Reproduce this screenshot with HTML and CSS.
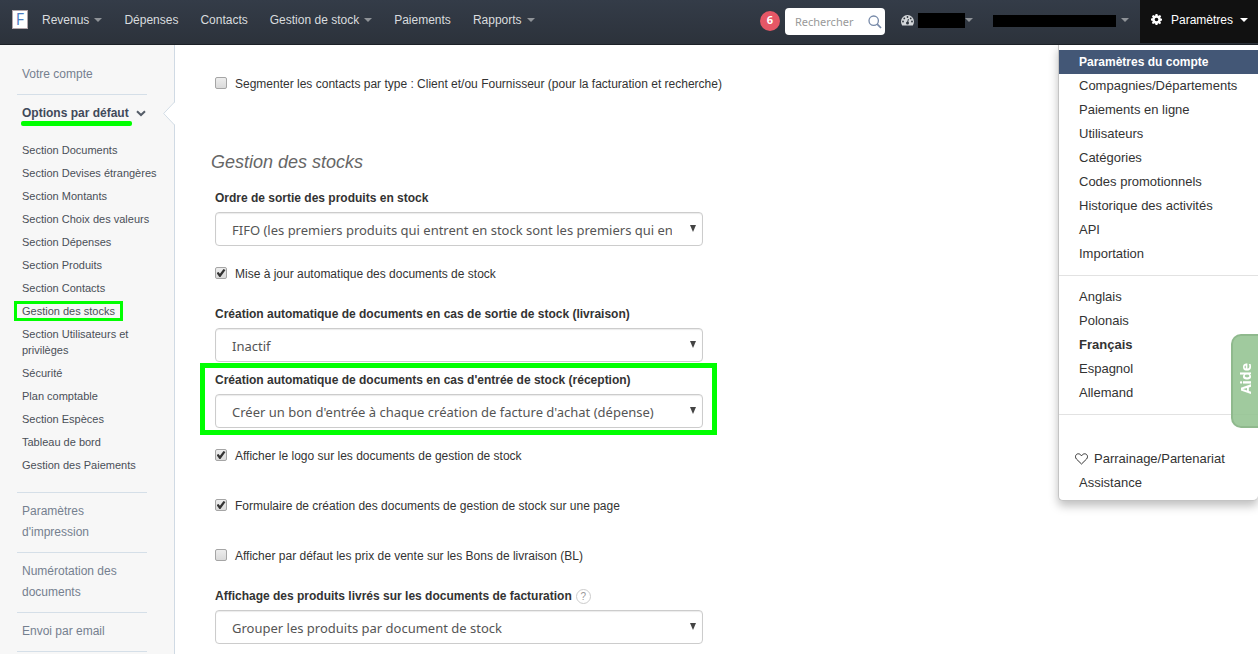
FILE: index.html
```html
<!DOCTYPE html>
<html lang="fr">
<head>
<meta charset="utf-8">
<title>Options par défaut</title>
<link rel="stylesheet" href="styles.css">
</head>
<body>
<header class="topbar">
  <a class="logo" href="#" aria-label="Accueil"><span>F</span></a>
  <nav class="nav">
    <a href="#">Revenus<i class="caret"></i></a>
    <a href="#">Dépenses</a>
    <a href="#">Contacts</a>
    <a href="#">Gestion de stock<i class="caret"></i></a>
    <a href="#">Paiements</a>
    <a href="#">Rapports<i class="caret"></i></a>
  </nav>
  <div class="tools">
    <span class="badge">6</span>
    <form class="search">
      <input type="text" placeholder="Rechercher" aria-label="Rechercher">
      <button type="button" aria-label="Lancer la recherche"><svg width="14" height="14" viewBox="0 0 14 14"><circle cx="5.7" cy="5.7" r="4.7" fill="none" stroke="#7689a8" stroke-width="1.3"/><path d="M9.2 9.2 13 13" stroke="#7689a8" stroke-width="1.7"/></svg></button>
    </form>
    <button type="button" class="account" aria-label="Tableau de bord">
      <svg width="13" height="11" viewBox="0 0 13 11"><path d="M6.5 0A6.5 6.5 0 0 0 0 6.5c0 1.5.4 2.8 1.2 4h10.6c.8-1.200 1.200-2.500 1.200-4A6.500 6.500 0 0 0 6.500 0z" fill="#d5d8db"/><g fill="#2f363f"><circle cx="2" cy="6.500" r=".9"/><circle cx="3.300" cy="3.400" r=".9"/><circle cx="6.500" cy="2" r=".9"/><circle cx="9.700" cy="3.400" r=".9"/><circle cx="11" cy="6.500" r=".9"/><circle cx="6.500" cy="8" r="1.500"/></g><path d="M6.500 8 7.400 4" stroke="#2f363f"/></svg>
      <span class="mask mask-short"></span><i class="caret"></i>
    </button>
    <button type="button" class="company" aria-label="Compagnie"><span class="mask mask-long"></span><i class="caret"></i></button>
    <button type="button" class="settings">
      <svg width="11" height="11" viewBox="0 0 12 12"><path fill="#fff" fill-rule="evenodd" d="M5 0h2l.4 1.600.9.400L9.800 1.100l1.300 1.400-.9 1.400.3.900 1.500.3v2l-1.600.4-.3.800.9 1.500-1.400 1.300-1.400-.9-.9.400L7 12H5l-.4-1.500-.9-.4-1.400.9L.9 9.700l.9-1.400-.3-.9L0 7V5l1.600-.3.300-.9L1 2.400 2.400 1l1.400.9.8-.4zM6 4a2 2 0 1 0 0 4 2 2 0 0 0 0-4z"/></svg>
      <span>Paramètres</span><i class="caret"></i>
    </button>
    <ul class="menu">
      <li class="current"><a href="#">Paramètres du compte</a></li>
      <li><a href="#">Compagnies/Départements</a></li>
      <li><a href="#">Paiements en ligne</a></li>
      <li><a href="#">Utilisateurs</a></li>
      <li><a href="#">Catégories</a></li>
      <li><a href="#">Codes promotionnels</a></li>
      <li><a href="#">Historique des activités</a></li>
      <li><a href="#">API</a></li>
      <li><a href="#">Importation</a></li>
      <li class="divider"></li>
      <li><a href="#">Anglais</a></li>
      <li><a href="#">Polonais</a></li>
      <li><a href="#"><b>Français</b></a></li>
      <li><a href="#">Espagnol</a></li>
      <li><a href="#">Allemand</a></li>
      <li class="divider divider-wide"></li>
      <li><a href="#" class="with-icon"><svg width="13" height="12" viewBox="0 0 13 12"><path d="M6.500 11 1.400 6C-.6 3.500 1 .8 3.300.8 5 .8 6 2 6.500 3 7 2 8 .8 9.700.8 12 .8 13.600 3.500 11.600 6z" fill="none" stroke="#333"/></svg>Parrainage/Partenariat</a></li>
      <li><a href="#">Assistance</a></li>
    </ul>
  </div>
</header>
<div class="layout">
  <aside class="sidebar">
    <ul class="sections">
      <li><a href="#">Votre compte</a></li>
      <li class="active">
        <a href="#"><span class="marked">Options par défaut</span><svg width="10" height="7" viewBox="0 0 10 7"><path d="M1 1.200 5 5l4-3.800" fill="none" stroke="#555d68" stroke-width="2"/></svg></a>
        <svg class="notch" width="12" height="24" viewBox="0 0 12 24"><path d="M12 0 1 11.500 12 23z" fill="#fff"/><path d="M11.500 0 .7 11.500 11.500 23" fill="none" stroke="#d3dde6"/></svg>
        <ul class="subsections">
          <li><a href="#">Section Documents</a></li>
          <li><a href="#">Section Devises étrangères</a></li>
          <li><a href="#">Section Montants</a></li>
          <li><a href="#">Section Choix des valeurs</a></li>
          <li><a href="#">Section Dépenses</a></li>
          <li><a href="#">Section Produits</a></li>
          <li><a href="#">Section Contacts</a></li>
          <li class="boxed"><a href="#">Gestion des stocks</a></li>
          <li><a href="#">Section Utilisateurs et privilèges</a></li>
          <li><a href="#">Sécurité</a></li>
          <li><a href="#">Plan comptable</a></li>
          <li><a href="#">Section Espèces</a></li>
          <li><a href="#">Tableau de bord</a></li>
          <li><a href="#">Gestion des Paiements</a></li>
        </ul>
      </li>
      <li><a href="#">Paramètres d'impression</a></li>
      <li><a href="#">Numérotation des documents</a></li>
      <li><a href="#">Envoi par email</a></li>
    </ul>
  </aside>
  <main class="content">
    <label class="check check-first"><input type="checkbox">Segmenter les contacts par type : Client et/ou Fournisseur (pour la facturation et recherche)</label>
    <h2>Gestion des stocks</h2>
    <div class="field">
      <label for="ordre">Ordre de sortie des produits en stock</label>
      <div class="select"><select id="ordre"><option>FIFO (les premiers produits qui entrent en stock sont les premiers qui en sortent)</option></select></div>
    </div>
    <label class="check check-tight"><input type="checkbox" checked>Mise à jour automatique des documents de stock</label>
    <div class="field field-tight">
      <label for="sortie">Création automatique de documents en cas de sortie de stock (livraison)</label>
      <div class="select"><select id="sortie"><option>Inactif</option></select></div>
    </div>
    <div class="field highlighted">
      <label for="entree">Création automatique de documents en cas d'entrée de stock (réception)</label>
      <div class="select"><select id="entree"><option>Créer un bon d'entrée à chaque création de facture d'achat (dépense)</option></select></div>
    </div>
    <label class="check"><input type="checkbox" checked>Afficher le logo sur les documents de gestion de stock</label>
    <label class="check"><input type="checkbox" checked>Formulaire de création des documents de gestion de stock sur une page</label>
    <label class="check check-tight"><input type="checkbox">Afficher par défaut les prix de vente sur les Bons de livraison (BL)</label>
    <div class="field field-last">
      <div class="label-row"><label for="affichage">Affichage des produits livrés sur les documents de facturation</label><button type="button" class="help" aria-label="Aide sur l'affichage">?</button></div>
      <div class="select"><select id="affichage"><option>Grouper les produits par document de stock</option></select></div>
    </div>
  </main>
</div>
<button type="button" class="help-tab"><span>Aide</span></button>
</body>
</html>
```
FILE: styles.css
```css
* { box-sizing: border-box; }
body {
  margin: 0;
  min-height: 100vh;
  display: flex;
  flex-direction: column;
  font: 12px/20px "Liberation Sans", Arial, sans-serif;
  color: #333;
  background: #fff;
}
a { color: inherit; text-decoration: none; }
ul { list-style: none; margin: 0; padding: 0; }
button { font: inherit; color: inherit; border: 0; padding: 0; background: none; }
svg { display: block; flex: none; }

.topbar {
  display: flex;
  height: 45px;
  padding-left: 12px;
  background: linear-gradient(#343c48, #2c323b);
  border-bottom: 1px solid #1c2127;
  color: #d9dcdf;
}
.logo {
  width: 16px;
  height: 19px;
  margin-top: 10px;
  background: #fff;
  border: 1px solid #b3a5aa;
  color: #4a7bc0;
  font: 16px/17px "Open Sans", sans-serif;
  text-align: center;
}
.logo span { display: block; }
.nav { display: flex; gap: 22px; padding: 10px 0 0 14px; }
.nav a { display: flex; align-items: center; gap: 5px; height: 20px; white-space: nowrap; }
.caret {
  flex: none;
  border: 4px solid transparent;
  border-top-color: #8f9398;
  border-bottom: 0;
}
.tools { position: relative; display: flex; margin-left: auto; }
.badge {
  width: 20px;
  height: 20px;
  margin: 11px 5px 0 0;
  border-radius: 50%;
  background: #e65766;
  color: #fff;
  font: bold 11px/18px "Open Sans", sans-serif;
  text-align: center;
}
.search {
  display: flex;
  align-items: center;
  width: 100px;
  height: 27px;
  margin: 8px 16px 0 0;
  padding: 0 3px 0 10px;
  border-radius: 4px;
  background: #fff;
}
.search input {
  flex: 1;
  min-width: 0;
  padding: 0;
  border: 0;
  background: none;
  font: 11px/20px "Noto Sans", sans-serif;
}
.search input::placeholder { color: #999; opacity: 1; }
.account, .company { display: flex; align-items: center; height: 20px; margin-top: 10px; }
.account { margin-right: 20px; }
.company { gap: 5px; margin-right: 11px; }
.mask { background: #000; }
.mask-short { width: 47px; height: 15px; margin-left: 4px; }
.mask-long { width: 123px; height: 12px; margin-top: 2px; }
.settings {
  display: flex;
  align-items: center;
  gap: 7px;
  height: 43px;
  padding: 0 10px 4px 11px;
  background: #111;
  color: #fff;
}
.settings span { margin-left: 2px; }
.settings .caret { border-top-color: #fff; }
.menu {
  position: absolute;
  z-index: 2;
  top: 45px;
  right: 0;
  width: 200px;
  padding: 5px 0;
  background: #fff;
  border: 1px solid #c4c4c4;
  border-top: 0;
  border-right: 0;
  border-radius: 0 0 5px 5px;
  box-shadow: 0 5px 10px rgba(0, 0, 0, .25);
  color: #333;
  font-size: 13px;
  line-height: 24px;
}
.menu a { display: block; padding-left: 20px; }
.menu .current { background: #435776; color: #fff; font-size: 12px; font-weight: bold; }
.menu .with-icon { display: flex; align-items: center; gap: 6px; padding-left: 16px; }
.divider { height: 1px; margin: 9px 0; background: #e2e2e2; }
.divider-wide { margin-bottom: 32px; }

.layout { display: flex; flex: 1; }
.sidebar {
  flex: none;
  width: 175px;
  padding: 11px 27px 0 17px;
  background: #f7f7f7;
  border-right: 1px solid #d0dae4;
}
.sections { color: #75808f; }
.sections > li {
  position: relative;
  padding: 8px 5px 9px;
  border-bottom: 1px solid #d5dfe8;
  line-height: 21px;
}
.sections > .active { padding-bottom: 19px; }
.active > a { display: flex; align-items: center; gap: 7px; color: #41495a; font-weight: bold; white-space: nowrap; }
.marked { position: relative; }
.marked::after {
  content: "";
  position: absolute;
  left: -1px;
  right: -3px;
  bottom: -2px;
  height: 5px;
  border-radius: 2px;
  background: #0f0;
}
.notch { position: absolute; top: 7px; right: -28px; }
.subsections {
  display: flex;
  flex-direction: column;
  gap: 7px;
  margin: 18px -20px 0 0;
  color: #4a4f57;
  font-size: 11px;
  line-height: 16px;
}
.boxed { position: relative; align-self: flex-start; }
.boxed::after {
  content: "";
  position: absolute;
  inset: -2px -8px;
  border: 3px solid #0f0;
}

.content { flex: 1; min-width: 0; padding: 29px 40px 0; }
.check { display: flex; align-items: center; gap: 8px; margin-bottom: 30px; }
.check-first { margin-bottom: 58px; }
.check-tight { margin-bottom: 20px; }
.check input {
  appearance: none;
  flex: none;
  display: grid;
  place-items: center;
  width: 12px;
  height: 12px;
  margin: 0 0 2px;
  border: 1px solid #a5a5a5;
  border-radius: 2px;
  background: linear-gradient(#ededed, #dadada);
}
.check input:checked::after {
  content: "";
  width: 9px;
  height: 8px;
  background: #333;
  clip-path: polygon(0 50%, 22% 38%, 38% 58%, 78% 0, 100% 12%, 44% 100%, 32% 100%);
}
h2 {
  margin: 0 0 16px -4px;
  color: #666;
  font-size: 18px;
  font-style: italic;
  font-weight: normal;
  line-height: 20px;
}
.field { position: relative; max-width: 488px; margin-bottom: 18px; }
.field-tight { margin-bottom: 8px; }
.field-last { margin-bottom: 0; }
.field label { display: block; font-weight: bold; }
.highlighted::after {
  content: "";
  position: absolute;
  inset: -7px -14px -7px -15px;
  border: 5px solid #0f0;
  pointer-events: none;
}
.select { position: relative; margin-top: 4px; }
.select::after {
  content: "";
  position: absolute;
  top: 13px;
  right: 7px;
  border: 3px solid transparent;
  border-top: 7px solid #444;
  border-bottom: 0;
  pointer-events: none;
}
.select select {
  appearance: none;
  display: block;
  width: 100%;
  height: 34px;
  padding: 2px 30px 0 16px;
  border: 1px solid #ccc;
  border-radius: 4px;
  background: #fff;
  box-shadow: inset 0 1px 1px rgba(0, 0, 0, .08);
  color: #555;
  font: 13px/20px "Noto Sans", sans-serif;
}
.label-row { display: flex; align-items: center; gap: 4px; }
.help {
  width: 15px;
  height: 15px;
  border: 1px solid #ccc;
  border-radius: 50%;
  color: #999;
  font-size: 10px;
  line-height: 13px;
}
.help-tab {
  position: fixed;
  z-index: 3;
  top: 334px;
  right: 0;
  width: 27px;
  height: 94px;
  border: 2px solid #8fb98d;
  border-right: 0;
  border-radius: 10px 0 0 10px;
  background: rgba(150, 196, 148, .9);
  color: #fff;
  font: bold 14px/20px "Noto Sans", sans-serif;
}
.help-tab span { display: inline-block; writing-mode: vertical-rl; transform: rotate(180deg); }
```
